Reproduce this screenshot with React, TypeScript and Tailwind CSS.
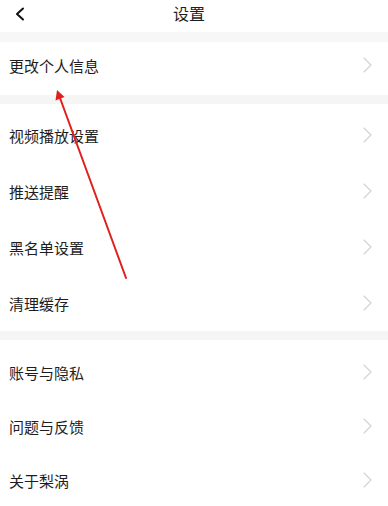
import React from 'react';

const groups: { items: string[]; pad: string; row: string }[] = [
  { items: ['更改个人信息'], pad: 'pb-[7px]', row: 'h-[46px]' },
  { items: ['视频播放设置', '推送提醒', '黑名单设置', '清理缓存'], pad: 'pt-[3px]', row: 'h-[56px]' },
  { items: ['账号与隐私', '问题与反馈', '关于梨涡'], pad: 'pt-[5px]', row: 'h-[54px]' },
];

const Chevron = () => (
  <svg width="9" height="16" viewBox="0 0 9 16" fill="none" className="shrink-0">
    <path d="M1 1l7 7-7 7" stroke="#d2d2d2" strokeWidth="1.1" strokeLinecap="round" strokeLinejoin="round" />
  </svg>
);

export default function App() {
  return (
    <div
      className="relative w-[388px] h-[506px] overflow-hidden bg-white text-[#1e1e1e]"
      style={{ fontFamily: '"Noto Sans CJK SC", "Noto Sans", sans-serif' }}
    >
      <div className="flex items-center h-[32px]">
        <div className="w-[30px] flex justify-end pr-[5px] pb-[4px]">
          <svg width="10" height="14" viewBox="0 0 10 14" fill="none">
            <path d="M8 1.5L2 7l6 5.5" stroke="#111" strokeWidth="2" strokeLinecap="round" strokeLinejoin="round" />
          </svg>
        </div>
        <div className="flex-1 text-center text-[16px] leading-none pb-[7px]">设置</div>
        <div className="w-[40px]" />
      </div>

      {groups.map((g, gi) => (
        <div key={gi}>
          <div className={gi === 0 ? 'h-[10px] bg-[#f7f7f7]' : 'h-[9px] bg-[#f5f5f5]'} />
          <div className={g.pad}>
            {g.items.map((label) => (
              <div key={label} className={`flex items-center justify-between pl-[9px] pr-[16px] ${g.row}`}>
                <span className="text-[15px] leading-none">{label}</span>
                <Chevron />
              </div>
            ))}
          </div>
        </div>
      ))}

      {/* red annotation arrow */}
      <svg className="absolute left-0 top-0 pointer-events-none" width="388" height="506" viewBox="0 0 388 506">
        <line x1="126" y1="278" x2="60" y2="98" stroke="#e0201c" strokeWidth="2" strokeLinecap="round" />
        <path d="M57 90l-1.5 10.5 9-3.5z" fill="#e0201c" />
      </svg>
    </div>
  );
}
